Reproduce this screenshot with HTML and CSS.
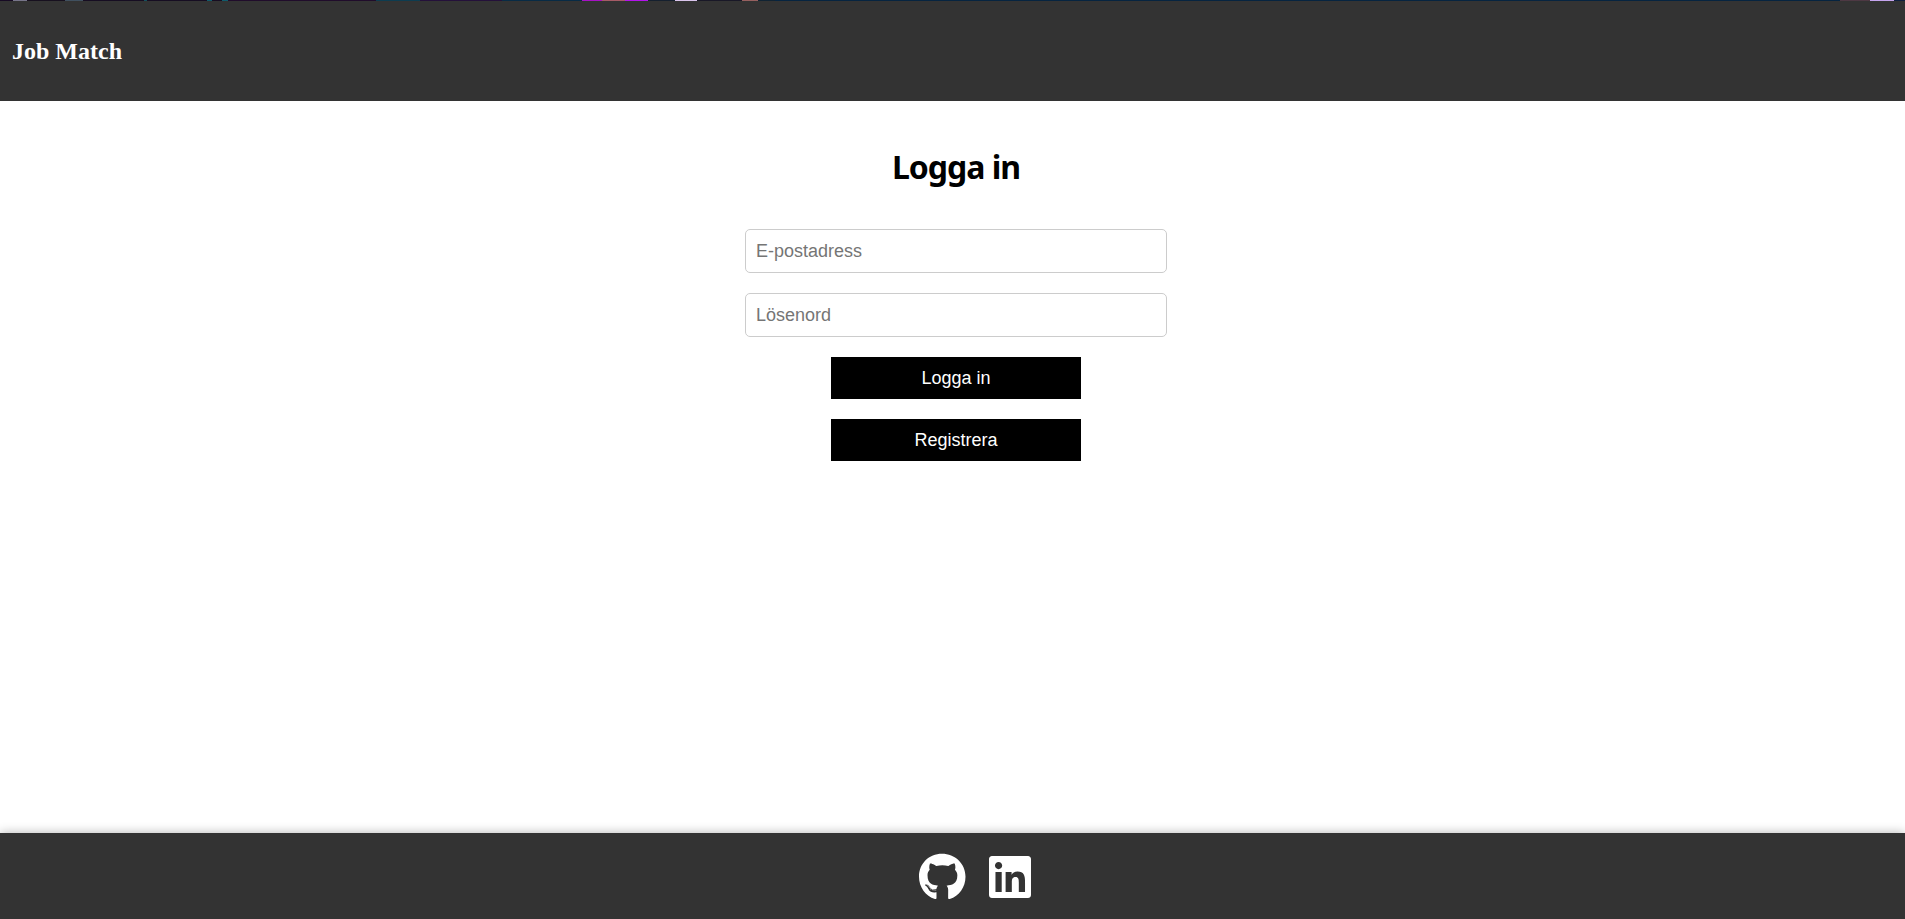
FILE: index.html
```html
<!DOCTYPE html>
<html lang="sv">
<head>
<meta charset="utf-8">
<title>Job Match</title>
<link rel="stylesheet" href="styles.css">
</head>
<body>
<div class="top-strip"></div>
<header class="header"><h2 class="brand">Job Match</h2></header>
<main class="main">
<h1 class="title">Logga in</h1>
<form class="form">
<input class="field" type="email" placeholder="E-postadress">
<input class="field" type="password" placeholder="Lösenord">
<button class="button" type="button">Logga in</button>
<button class="button" type="button">Registrera</button>
</form>
</main>
<footer class="footer">
<svg class="icon" viewBox="0 0 496 512" aria-label="GitHub"><path d="M165.900 397.400c0 2-2.300 3.600-5.200 3.600-3.300.3-5.600-1.300-5.600-3.600 0-2 2.300-3.600 5.200-3.600 3-.3 5.600 1.300 5.600 3.600zm-31.100-4.500c-.7 2 1.300 4.300 4.300 4.900 2.600 1 5.600 0 6.200-2s-1.300-4.300-4.300-5.200c-2.600-.7-5.500.3-6.200 2.300zm44.200-1.700c-2.900.7-4.900 2.600-4.600 4.900.3 2 2.900 3.300 5.900 2.600 2.900-.7 4.900-2.600 4.600-4.600-.3-1.900-3-3.200-5.900-2.900zM244.800 8C106.100 8 0 113.300 0 252c0 110.900 69.800 205.800 169.500 239.200 12.800 2.300 17.300-5.600 17.300-12.100 0-6.200-.3-40.400-.3-61.400 0 0-70 15-84.700-29.800 0 0-11.400-29.100-27.800-36.600 0 0-22.900-15.700 1.600-15.400 0 0 24.900 2 38.600 25.800 21.900 38.600 58.600 27.500 72.900 20.900 2.300-16 8.800-27.100 16-33.700-55.900-6.200-112.300-14.300-112.300-110.500 0-27.500 7.600-41.300 23.600-58.900-2.600-6.500-11.100-33.300 2.600-67.900 20.900-6.500 69 27 69 27 20-5.600 41.500-8.500 62.800-8.500s42.800 2.900 62.800 8.500c0 0 48.100-33.600 69-27 13.700 34.700 5.200 61.400 2.600 67.900 16 17.700 25.800 31.500 25.800 58.900 0 96.500-58.900 104.200-114.800 110.500 9.200 7.900 17 22.900 17 46.400 0 33.700-.3 75.400-.3 83.600 0 6.500 4.600 14.400 17.300 12.100C428.200 457.800 496 362.900 496 252 496 113.300 383.500 8 244.800 8zM97.200 352.900c-1.300 1-1 3.300.7 5.200 1.600 1.600 3.900 2.300 5.200 1 1.300-1 1-3.300-.7-5.200-1.600-1.600-3.900-2.300-5.200-1zm-10.800-8.100c-.7 1.300.3 2.900 2.300 3.900 1.600 1 3.600.7 4.300-.7.700-1.300-.3-2.900-2.300-3.900-2-.6-3.600-.3-4.300.7zm32.400 35.600c-1.600 1.300-1 4.300 1.300 6.200 2.300 2.300 5.200 2.600 6.500 1 1.300-1.300.7-4.300-1.300-6.200-2.200-2.300-5.200-2.600-6.500-1zm-11.400-14.700c-1.600 1-1.600 3.600 0 5.900 1.600 2.300 4.300 3.300 5.600 2.300 1.600-1.300 1.600-3.900 0-6.200-1.400-2.300-4-3.300-5.600-2z"/></svg>
<svg class="icon" viewBox="0 0 448 512" aria-label="LinkedIn"><path d="M416 32H31.900C14.300 32 0 46.500 0 64.300v383.400C0 465.500 14.300 480 31.900 480H416c17.600 0 32-14.500 32-32.300V64.300c0-17.800-14.400-32.300-32-32.300zM135.400 416H69V202.200h66.500V416zm-33.200-243c-21.300 0-38.500-17.300-38.500-38.500S80.900 96 102.200 96c21.200 0 38.500 17.300 38.500 38.500 0 21.300-17.200 38.500-38.500 38.500zm282.100 243h-66.400V312c0-24.800-.5-56.700-34.500-56.700-34.600 0-39.900 27-39.900 54.900V416h-66.400V202.200h63.700v29.200h.9c8.900-16.800 30.600-34.500 62.900-34.500 67.200 0 79.700 44.300 79.700 101.900V416z"/></svg>
</footer>
</body>
</html>
```
FILE: styles.css
```css
* { box-sizing: border-box; }
body {
  margin: 0;
  height: 100vh;
  display: flex;
  flex-direction: column;
  overflow: hidden;
  background: #fff;
  font-family: "Liberation Serif", serif;
}
.top-strip {
  height: 1px;
  background: linear-gradient(90deg, #170a24 0 13px, #77758a 13px 27px, #17101f 27px 65px, #40505f 65px 83px, #160d22 83px 144px, #12505c 144px 147px, #160d22 147px 207px, #105b6b 207px 212px, #160d22 212px 222px, #105b6b 222px 228px, #200c2b 228px 376px, #0d3c50 376px 420px, #24103a 420px 502px, #082b45 502px 582px, #a712c4 582px 602px, #a55b66 602px 625px, #b414ec 625px 648px, #15202f 648px 675px, #dac5ec 675px 697px, #191827 697px 742px, #96605f 742px 758px, #102333 758px 775px, #062440 775px 1840px, #4d3843 1840px 1870px, #c5a4ee 1870px 1894px, #102040 1894px);
}
.header {
  height: 100px;
  padding-left: 12px;
  display: flex;
  align-items: center;
  background: #333;
  color: #fff;
}
.brand { margin: 0; font-size: 24px; line-height: 28px; }
.main {
  flex: 1;
  display: flex;
  flex-direction: column;
  align-items: center;
  padding: 44px 0 0 7px;
}
.title {
  margin: 0 0 40px;
  font: bold 32px/44px "Noto Sans", sans-serif;
  letter-spacing: -1px;
}
.form {
  width: 422px;
  display: flex;
  flex-direction: column;
  align-items: center;
  gap: 20px;
}
.field, .button { font: 18px/20px "Liberation Sans", Arial, sans-serif; }
.field {
  width: 100%;
  height: 44px;
  padding: 10px;
  border: 1px solid #ccc;
  border-radius: 5px;
  background: #fff;
}
.field::placeholder { color: #757575; }
.button {
  width: 250px;
  height: 42px;
  padding: 10px;
  border: 0;
  background: #000;
  color: #fff;
}
.footer {
  height: 86px;
  padding: 20px 0 0 45px;
  display: flex;
  justify-content: center;
  align-items: flex-start;
  gap: 23px;
  background: #333;
  box-shadow: 0 0 10px rgba(0, 0, 0, .3);
}
.icon { height: 48px; fill: #fff; }
```
